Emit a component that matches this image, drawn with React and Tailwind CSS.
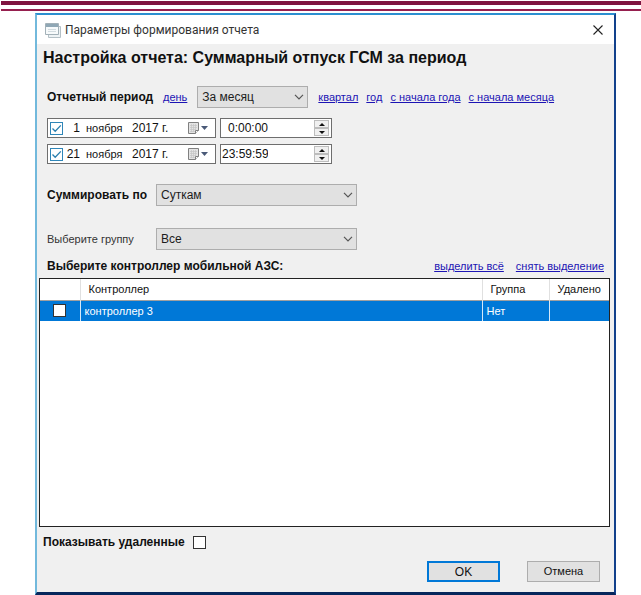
import React from 'react';

const Chevron = () => (
  <svg
    className="pointer-events-none absolute top-1/2 right-1 -translate-y-1/2"
    width="10"
    height="6"
    viewBox="0 0 10 6"
    fill="none"
    stroke="#555555"
    strokeWidth="1.2"
  >
    <path d="M1 0.8 L5 4.8 L9 0.8" />
  </svg>
);

const Select = ({ id, value, className }) => (
  <div className={`relative h-[22px] ${className}`}>
    <select
      id={id}
      defaultValue={value}
      className="block h-full w-full appearance-none border border-[#adadad] bg-[#e1e1e1] pl-1 text-[12px] text-[#1c1c1c]"
    >
      <option>{value}</option>
    </select>
    <Chevron />
  </div>
);

const TextLink = ({ children }) => (
  <a href="#" className="whitespace-nowrap text-[11px] text-[#1c14b4] underline">
    {children}
  </a>
);

const CheckBox = ({ id, label, checked, blue }) => (
  <span className="relative flex h-[13px] w-[13px] shrink-0">
    <input
      id={id}
      type="checkbox"
      aria-label={label}
      defaultChecked={checked}
      className={`peer h-full w-full appearance-none border bg-white ${blue ? 'border-[#2f86b8]' : 'border-[#333333]'}`}
    />
    <svg
      className="pointer-events-none absolute inset-0 hidden peer-checked:block"
      width="13"
      height="13"
      viewBox="0 0 13 13"
      fill="none"
      stroke="#2a7fae"
      strokeWidth="1.3"
    >
      <path d="M2.5 6.5 L5.2 9.3 L10.8 3.4" />
    </svg>
  </span>
);

const CalendarButton = () => (
  <button type="button" aria-label="Календарь" className="mr-1.5 flex shrink-0 items-center">
    <svg width="22" height="14" viewBox="0 0 22 14">
      <path d="M1.5 1.5 H11.5 V9.5 L8.5 12.5 H1.5 Z" fill="#e4e4e4" stroke="#808080" />
      <path d="M3 4.5 H10 M3 6.5 H10 M3 8.5 H9 M3 10.5 H8 M4.5 3 V11 M6.5 3 V11 M8.5 3 V9" stroke="#c4c4c4" strokeWidth="0.7" />
      <path d="M8.5 12.5 V9.5 H11.5" fill="#ffffff" stroke="#808080" />
      <path d="M14 5 H21 L17.5 9 Z" fill="#4a5a78" />
    </svg>
  </button>
);

const Spinner = () => (
  <span className="mr-0.5 flex w-[15px] shrink-0 flex-col">
    <button type="button" aria-label="Увеличить" className="flex h-2 items-center justify-center border border-[#bdbdbd] bg-[#f0f0f0]">
      <svg width="6" height="3" viewBox="0 0 6 3"><path d="M3 0 L6 3 H0 Z" fill="#111111" /></svg>
    </button>
    <button type="button" aria-label="Уменьшить" className="flex h-2 items-center justify-center border border-[#bdbdbd] bg-[#f0f0f0]">
      <svg width="6" height="3" viewBox="0 0 6 3"><path d="M3 3 L6 0 H0 Z" fill="#111111" /></svg>
    </button>
  </span>
);

const DateRow = ({ name, day, month, year, time }) => (
  <div className="flex gap-1">
    <div className="flex h-5 w-[169px] items-center border border-[#6e6e6e] bg-white pl-0.5">
      <CheckBox label={`${name}: включить`} checked blue />
      <input aria-label={`${name}: день`} defaultValue={day} className="ml-0.5 w-[15px] text-right text-[12px]" />
      <input aria-label={`${name}: месяц`} defaultValue={month} className="ml-1.5 w-[46px] text-[11px]" />
      <input aria-label={`${name}: год`} defaultValue={year} className="w-[48px] min-w-0 grow text-[12px]" />
      <CalendarButton />
    </div>
    <div className="flex h-5 w-[112px] items-center border border-[#6e6e6e] bg-white pl-px">
      <input aria-label={`${name}: время`} defaultValue={time} className="w-[46px] text-right text-[12px]" />
      <span className="grow" />
      <Spinner />
    </div>
  </div>
);

const periods = [
  { name: 'Начало', day: '1', month: 'ноября', year: '2017 г.', time: '0:00:00' },
  { name: 'Конец', day: '21', month: 'ноября', year: '2017 г.', time: '23:59:59' },
];

const controllers = [{ name: 'контроллер 3', group: 'Нет', removed: '' }];

const TitleBar = () => (
  <header className="flex h-[29px] items-center bg-white pr-2.5 pl-2">
    <svg width="16" height="16" viewBox="0 0 16 16">
      <path d="M3.5 4.5 H15.5 V15.5 H3.5 Z" fill="#eef3f5" stroke="#b4c0c6" />
      <path d="M0.5 1.5 H13.5 V12.5 H0.5 Z" fill="#f7fafb" stroke="#a3b1b8" />
      <path d="M1 2 H13 V5 H1 Z" fill="#8fa7b5" />
      <path d="M3 7.5 H11 M3 9.5 H11" stroke="#d3dce0" />
    </svg>
    <h1 className="ml-1 grow font-[Roboto,sans-serif] text-[12px] text-[#333333]">
      Параметры формирования отчета
    </h1>
    <button type="button" aria-label="Закрыть" className="p-px">
      <svg width="10" height="10" viewBox="0 0 10 10" stroke="#222222" strokeWidth="1.1">
        <path d="M0.5 0.5 L9.5 9.5 M9.5 0.5 L0.5 9.5" />
      </svg>
    </button>
  </header>
);

const ControllerTable = () => (
  <div className="mr-1 ml-0.5 grow border border-[#222222] bg-white">
    <table className="w-full table-fixed border-collapse text-left text-[11px]">
      <thead>
        <tr className="h-[21px] border-b border-[#a0a0a0]">
          <th className="w-10 border-r border-[#e0e0e0]" aria-label="Выбор" />
          <th className="border-r border-[#e0e0e0] pl-2 font-normal">Контроллер</th>
          <th className="w-[67px] border-r border-[#e0e0e0] pl-2 font-normal">Группа</th>
          <th className="w-[60px] pl-2 font-normal">Удалено</th>
        </tr>
      </thead>
      <tbody>
        {controllers.map((row) => (
          <tr key={row.name} className="h-[21px] bg-[#0078d7] text-white">
            <td className="border-r border-[#d5e8f8]">
              <span className="flex justify-center"><CheckBox label={row.name} /></span>
            </td>
            <td className="border-r border-[#d5e8f8] pl-1">{row.name}</td>
            <td className="border-r border-[#d5e8f8] pl-1">{row.group}</td>
            <td className="pl-1">{row.removed}</td>
          </tr>
        ))}
      </tbody>
    </table>
  </div>
);

const App = () => (
  <div className="flex min-h-screen flex-col bg-white font-['Liberation_Sans',Arial,sans-serif] text-[#111111]">
    <div className="mt-px ml-px h-1 shrink-0 bg-[#7f1440]" />
    <div className="mt-1 ml-px h-0.5 shrink-0 bg-[#96204f]" />
    <main className="mt-0.5 mr-[25px] ml-[35px] flex grow flex-col border-x-2 border-t-2 border-b-3 border-t-[#2c8fd0] border-r-[#12418c] border-b-[#06275c] border-l-[#72b9dc] bg-[#f0f0f0]">
      <TitleBar />
      <h2 className="mt-0.5 ml-1.5 text-[16px] leading-6 font-bold whitespace-nowrap">
        Настройка отчета: Суммарный отпуск ГСМ за период
      </h2>

      <div className="mt-4 ml-2.5 flex items-center">
        <label htmlFor="period" className="w-[116px] text-[12px] font-bold whitespace-nowrap">Отчетный период</label>
        <TextLink>день</TextLink>
        <Select id="period" value="За месяц" className="mx-2.5 w-[111px]" />
        <div className="flex gap-2">
          <TextLink>квартал</TextLink>
          <TextLink>год</TextLink>
          <TextLink>с начала года</TextLink>
          <TextLink>с начала месяца</TextLink>
        </div>
      </div>

      <div className="mt-2.5 ml-2.5 flex flex-col gap-1.5">
        {periods.map((period) => <DateRow key={period.name} {...period} />)}
      </div>

      <div className="mt-5 ml-2.5 flex items-center">
        <label htmlFor="sum" className="w-[109px] text-[12px] font-bold whitespace-nowrap">Суммировать по</label>
        <Select id="sum" value="Суткам" className="w-[201px]" />
      </div>
      <div className="mt-[22px] ml-2.5 flex items-center">
        <label htmlFor="group" className="w-[109px] text-[11px] text-[#333333]">Выберите группу</label>
        <Select id="group" value="Все" className="w-[201px]" />
      </div>

      <div className="mt-2 mr-2.5 mb-1 ml-2.5 flex h-4 items-center justify-between">
        <h3 className="text-[12px] font-bold">Выберите контроллер мобильной АЗС:</h3>
        <div className="flex gap-3">
          <TextLink>выделить всё</TextLink>
          <TextLink>снять выделение</TextLink>
        </div>
      </div>

      <ControllerTable />

      <div className="mt-1.5 ml-1.5 flex items-center gap-2">
        <label htmlFor="deleted" className="text-[12px] font-bold">Показывать удаленные</label>
        <CheckBox id="deleted" />
      </div>
      <div className="mt-2.5 mr-3.5 mb-2.5 flex justify-end gap-[27px]">
        <button type="button" className="h-[21px] w-[73px] border-2 border-[#0078d7] bg-[#e1e1e1] text-[12px] leading-none">OK</button>
        <button type="button" className="h-[21px] w-[73px] border border-[#adadad] bg-[#e1e1e1] text-[11px] leading-none">Отмена</button>
      </div>
    </main>
  </div>
);

export default App;
